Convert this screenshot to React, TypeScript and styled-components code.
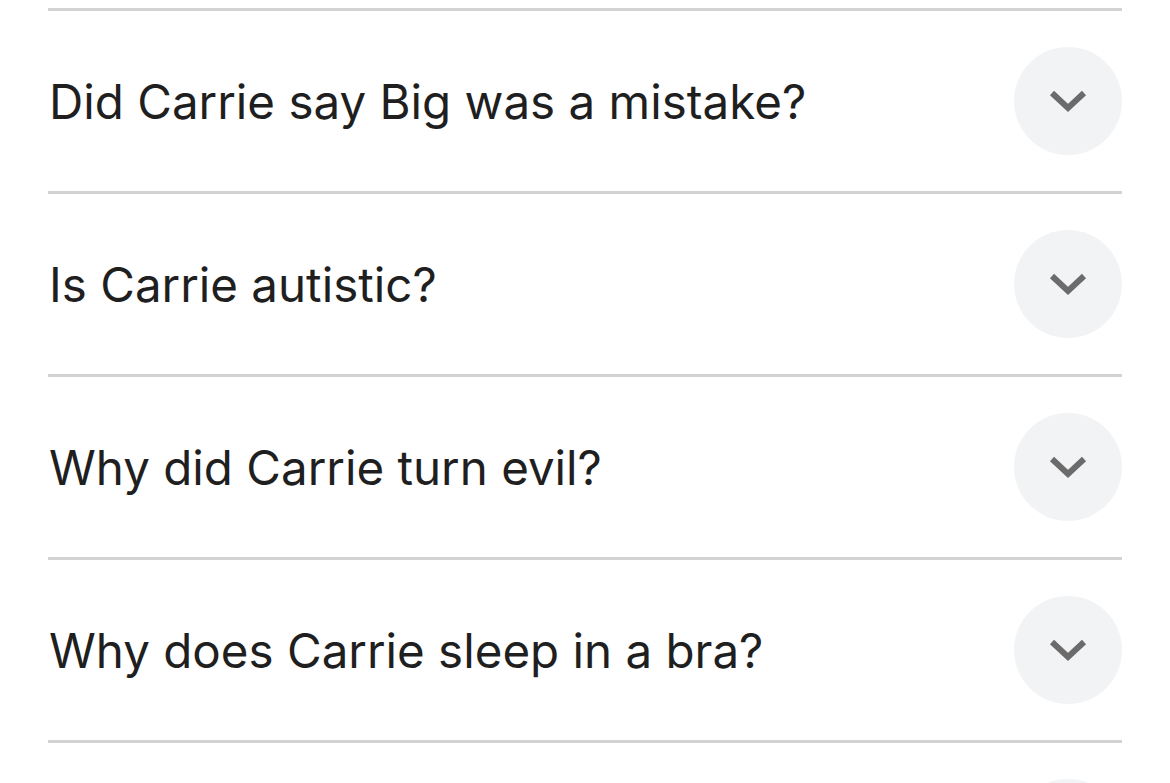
import React from 'react'
import styled, { createGlobalStyle } from 'styled-components'

const GlobalStyle = createGlobalStyle`
    html, body {
        margin: 0;
        padding: 0;
        background: #ffffff;
    }
    body {
        font-family: Inter, Roboto, "Noto Sans", Arial, sans-serif;
        color: #1f1f1f;
    }
`

const questions = [
    'Did Carrie say Big was a mistake?',
    'Is Carrie autistic?',
    'Why did Carrie turn evil?',
    'Why does Carrie sleep in a bra?',
    '',
]

const ChevronDown = () => (
    <svg width="38" height="24" viewBox="0 0 38 24" fill="none">
        <path
            d="M3 3 L19 18 L35 3"
            stroke="#6b6b6c"
            strokeWidth="6"
            strokeLinecap="butt"
            strokeLinejoin="miter"
        />
    </svg>
)

const App = () => {
    return (
        <>
            <GlobalStyle />
            <List>
                {questions.map((q, i) => (
                    <Item key={i}>
                        <Question>{q}</Question>
                        <ToggleButton aria-label="Expand">
                            <ChevronDown />
                        </ToggleButton>
                    </Item>
                ))}
            </List>
        </>
    )
}

export default App

const List = styled.div`
    padding: 8px 48px 0 48px;
`
const Item = styled.div`
    display: flex;
    align-items: center;
    justify-content: space-between;
    height: 180px;
    border-top: 3px solid #d3d3d3;
`
const Question = styled.div`
    padding-left: 1px;
    font-size: 47.5px;
    font-weight: 400;
    letter-spacing: 0;
    color: #1f1f1f;
`
const ToggleButton = styled.button`
    display: flex;
    align-items: center;
    justify-content: center;
    width: 108px;
    height: 108px;
    padding: 0;
    padding-top: 2px;
    border: none;
    border-radius: 50%;
    background: #f2f3f5;
    cursor: pointer;
`
